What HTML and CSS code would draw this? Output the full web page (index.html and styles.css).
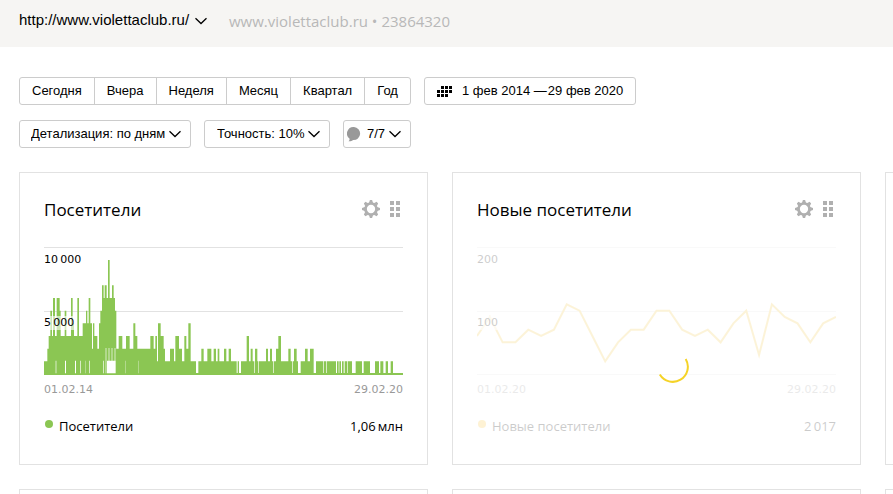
FILE: index.html
```html
<!DOCTYPE html>
<html lang="ru">
  <head>
    <meta charset="UTF-8" />
    <title>Сводка</title>
    <link rel="stylesheet" href="styles.css" />
  </head>
  <body>
    <svg class="sprite" width="0" height="0" aria-hidden="true">
      <symbol id="arrow" viewBox="0 0 12 8">
        <path d="M.5 1.2l5.500 5.300 5.500-5.300" fill="none" stroke="currentColor" stroke-width="1.300" />
      </symbol>
      <symbol id="gear" viewBox="0 0 18 18">
        <circle cx="9" cy="9" r="5.500" fill="none" stroke="currentColor" stroke-width="2.700" />
        <g fill="currentColor">
          <path id="teeth" d="M6.800 3.500L7.900 0h2.200l1.100 3.500zM6.800 14.500L7.900 18h2.200l1.100-3.500zM3.500 6.800L0 7.900v2.200l3.500 1.100zM14.500 6.800L18 7.900v2.200l-3.500 1.100z" />
          <use href="#teeth" transform="rotate(45 9 9)" />
        </g>
      </symbol>
      <symbol id="drag" viewBox="0 0 10 16">
        <path d="M0 0h4v4H0zM6 0h4v4H6zM0 6h4v4H0zM6 6h4v4H6zM0 12h4v4H0zM6 12h4v4H6z" fill="currentColor" />
      </symbol>
    </svg>

    <header class="header">
      <div class="dropdown counter">
        <select aria-label="Счётчик">
          <option>http://www.violettaclub.ru/</option>
        </select>
        <svg class="arrow"><use href="#arrow" /></svg>
      </div>
      <span class="counter-info">www.violettaclub.ru • 23864320</span>
    </header>

    <main>
      <div class="toolbar">
        <div class="periods">
          <button>Сегодня</button>
          <button>Вчера</button>
          <button>Неделя</button>
          <button>Месяц</button>
          <button>Квартал</button>
          <button>Год</button>
        </div>
        <button class="calendar">
          <svg width="15" height="11" viewBox="0 0 15 11">
            <path d="M4 0h3v3H4zM8 0h3v3H8zM12 0h3v3h-3zM0 4h3v3H0zM4 4h3v3H4zM8 4h3v3H8zM12 4h3v3h-3zM0 8h3v3H0zM4 8h3v3H4zM8 8h3v3H8z" />
          </svg>
          <span>1 фев 2014 —&#8202;29 фев 2020</span>
        </button>
      </div>

      <div class="toolbar">
        <div class="dropdown">
          <select aria-label="Детализация">
            <option>Детализация: по дням</option>
          </select>
          <svg class="arrow"><use href="#arrow" /></svg>
        </div>
        <div class="dropdown accuracy">
          <select aria-label="Точность">
            <option>Точность: 10%</option>
          </select>
          <svg class="arrow"><use href="#arrow" /></svg>
        </div>
        <div class="dropdown notes">
          <svg class="bubble" width="14" height="16" viewBox="0 0 14 16">
            <path d="M7 1a6.500 6.500 0 1 1-.8 13C5 15 3.300 15.500 1.500 15.300c.8-.7 1.100-1.500 1.100-2.600A6.500 6.500 0 0 1 7 1z" />
          </svg>
          <select aria-label="Примечания">
            <option>7/7</option>
          </select>
          <svg class="arrow"><use href="#arrow" /></svg>
        </div>
      </div>

      <div class="widgets">
        <section class="widget">
          <div class="widget-head">
            <h2>Посетители</h2>
            <button aria-label="Настроить"><svg width="18" height="18"><use href="#gear" /></svg></button>
            <button aria-label="Переместить"><svg width="10" height="16"><use href="#drag" /></svg></button>
          </div>
          <div class="chart">
            <svg viewBox="0 0 1077 384" preserveAspectRatio="none">
              <path class="grid" d="M0 1.500H1077M0 193.500H1077M0 382.500H1077" />
              <path id="visitors" class="bars" />
              <path id="gaps" class="gaps" />
            </svg>
            <span class="tick">10&#8201;000</span>
            <span class="tick middle">5&#8201;000</span>
          </div>
          <div class="dates"><span>01.02.14</span><span>29.02.20</span></div>
          <div class="legend">
            <i class="dot"></i><span>Посетители</span><span class="total">1,06&#8201;млн</span>
          </div>
        </section>

        <section class="widget loading">
          <div class="widget-head">
            <h2>Новые посетители</h2>
            <button aria-label="Настроить"><svg width="18" height="18"><use href="#gear" /></svg></button>
            <button aria-label="Переместить"><svg width="10" height="16"><use href="#drag" /></svg></button>
          </div>
          <div class="chart">
            <svg viewBox="0 0 1077 384" preserveAspectRatio="none">
              <path class="grid" d="M0 1.500H1077M0 193.500H1077M0 382.500H1077" />
              <polyline id="newcomers" class="line" />
            </svg>
            <span class="tick">200</span>
            <span class="tick middle">100</span>
          </div>
          <div class="dates"><span>01.02.20</span><span>29.02.20</span></div>
          <div class="legend">
            <i class="dot"></i><span>Новые посетители</span><span class="total">2&#8201;017</span>
          </div>
          <svg class="spinner" width="32" height="32" viewBox="0 0 32 32">
            <path d="M28.700 8A15 15 0 0 1 2.800 23.500" />
          </svg>
        </section>

        <section class="widget"></section>
        <section class="widget"></section>
        <section class="widget"></section>
        <section class="widget"></section>
      </div>
    </main>

    <script src="charts.js"></script>
  </body>
</html>
```

FILE: styles.css
```css
body {
  margin: 0;
  overflow: hidden;
  background: #fff;
  color: #000;
  font-family: "Liberation Sans", Arial, sans-serif;
  font-size: 13px;
}

button,
select {
  margin: 0;
  padding: 0;
  border: 0;
  background: transparent;
  color: inherit;
  font: inherit;
  cursor: pointer;
}

select {
  appearance: none;
}

.sprite {
  position: absolute;
}

.header {
  display: flex;
  align-items: center;
  height: 47px;
  padding: 0 19px 6px;
  box-sizing: border-box;
  background: #f6f5f3;
}

.counter-info {
  margin-left: 22px;
  color: #b8b8b8;
  font-family: "Open Sans", "Noto Sans", sans-serif;
  font-size: 15px;
  line-height: 20px;
}

main {
  padding: 30px 0 0 19px;
}

.toolbar {
  display: flex;
  gap: 13px;
  margin-bottom: 15px;
}

.periods,
.calendar,
.dropdown {
  display: flex;
  align-items: center;
  height: 28px;
  box-sizing: border-box;
  border: 1px solid #ccc;
  border-radius: 3px;
}

.periods button {
  height: 26px;
  padding: 0 12px 2px;
}

.periods button + button {
  border-left: 1px solid #ccc;
}

.calendar {
  gap: 10px;
  padding: 0 12px;
}

.calendar span {
  padding-bottom: 2px;
}

.dropdown {
  padding: 0 9px 0 11px;
  gap: 3px;
}

.dropdown select {
  padding-bottom: 2px;
}

.dropdown.accuracy {
  padding-left: 12px;
}

.dropdown.counter {
  padding: 0;
  border: 0;
  gap: 5px;
  font-size: 15px;
}

.dropdown.notes {
  padding: 0 9px 0 3px;
}

.bubble {
  margin-right: 3px;
  fill: #999;
}

.arrow {
  width: 12px;
  height: 8px;
  pointer-events: none;
}

.widgets {
  display: grid;
  grid-template-columns: repeat(3, minmax(409px, 1fr));
  gap: 24px;
  margin-top: 24px;
}

.widget {
  position: relative;
  box-sizing: border-box;
  min-height: 293px;
  padding: 24px;
  border: 1px solid #e2e2e2;
}

.widget-head {
  display: flex;
  align-items: center;
  height: 24px;
  margin-bottom: 26px;
  padding-right: 3px;
  gap: 10px;
  color: #b0b0b0;
}

.widget-head h2 {
  flex: 1;
  margin: 0;
  color: #000;
  font-family: "Open Sans", "Noto Sans", sans-serif;
  font-size: 17px;
  font-weight: 400;
}

.widget-head button {
  display: flex;
}

.chart {
  position: relative;
  height: 128px;
}

.chart svg {
  display: block;
  width: 100%;
  height: 100%;
}

.grid {
  stroke: #e2e2e2;
  stroke-width: 3;
}

.bars {
  fill: #8bc653;
}

.gaps {
  fill: #fff;
}

.line {
  fill: none;
  stroke: #f5c842;
  stroke-width: 2;
  vector-effect: non-scaling-stroke;
}

.tick {
  position: absolute;
  top: 6px;
  left: 0;
  background: rgba(255, 255, 255, 0.6);
  font-family: "DejaVu Sans", Verdana, sans-serif;
  font-size: 11px;
  line-height: 14px;
}

.tick.middle {
  top: 69px;
}

.dates {
  display: flex;
  justify-content: space-between;
  margin-top: 8px;
  color: #999;
  font-family: "DejaVu Sans", Verdana, sans-serif;
  font-size: 11px;
  line-height: 14px;
}

.legend {
  display: flex;
  align-items: center;
  margin-top: 19px;
  font-family: "Open Sans", "Noto Sans", sans-serif;
  font-size: 13px;
  line-height: 20px;
}

.dot {
  width: 8px;
  height: 8px;
  margin: 0 6px 4px 1px;
  border-radius: 50%;
  background: #8bc653;
}

.total {
  margin-left: auto;
}

.loading .chart,
.loading .dates,
.loading .legend {
  opacity: 0.2;
}

.loading .dot {
  background: #fbc02d;
}

.spinner {
  position: absolute;
  top: 178px;
  left: 50%;
  fill: none;
  stroke: #f5d327;
  stroke-width: 2;
}
```

FILE: charts.js
```javascript
const BASE = 381;
const STEP = 38;

// [x, level]: the level holds until the next x
const visitors = [
  [0, 1], [10, 2], [14, 3], [19, 5], [24, 3], [27, 6], [33, 3], [38, 6], [47, 5],
  [50, 3], [62, 5], [67, 3], [81, 6], [86, 4], [90, 3], [100, 6], [105, 3],
  [116, 4], [126, 5], [130, 4], [134, 6], [139, 4], [144, 2], [147, 4], [151, 3],
  [155, 3], [160, 2], [165, 4], [169, 5], [174, 7], [179, 6], [182, 7], [188, 6],
  [192, 9], [197, 6], [204, 7], [209, 6], [213, 5], [217, 2], [224, 3], [235, 2],
  [246, 3], [257, 2], [268, 4], [274, 3], [280, 2], [319, 3], [329, 2], [334, 3],
  [339, 1], [342, 4], [350, 3], [359, 2], [363, 1], [378, 2], [390, 1], [394, 3],
  [405, 2], [414, 1], [421, 3], [427, 2], [433, 4], [440, 1], [456, 0], [463, 1],
  [472, 2], [479, 1], [490, 2], [502, 1], [509, 2], [516, 1], [521, 2], [526, 1],
  [540, 2], [547, 1], [554, 2], [561, 1], [578, 0], [581, 1], [585, 0], [591, 1],
  [608, 3], [615, 1], [620, 2], [626, 1], [631, 0], [633, 2], [640, 1], [643, 0],
  [645, 1], [666, 2], [672, 1], [678, 2], [684, 1], [688, 0], [690, 1], [696, 2],
  [703, 3], [711, 1], [733, 2], [740, 1], [744, 0], [746, 1], [750, 2], [758, 1],
  [762, 0], [770, 1], [783, 2], [791, 1], [798, 2], [809, 0], [816, 1], [838, 0],
  [840, 1], [846, 0], [848, 1], [876, 0], [879, 1], [884, 0], [886, 1], [891, 0],
  [894, 1], [899, 0], [902, 1], [909, 0], [911, 1], [924, 0], [935, 1], [954, 0],
  [959, 1], [978, 0], [993, 1], [1005, 0], [1009, 1], [1018, 0], [1025, 1],
  [1032, 0], [1040, 1], [1047, 0],
];

let d = `M0 ${BASE}`;
for (const [x, level] of visitors) {
  d += `H${x}V${level ? BASE - level * STEP : BASE - 3}`;
}
d += "H1077V384H0z";
document.getElementById("visitors").setAttribute("d", d);

// holes under the bars: [x, width, levels]
const gaps = [
  [35, 2, 1], [63, 3, 1], [93, 3, 1], [109, 2, 1], [124, 1, 1], [136, 2, 1],
  [177, 2, 1], [185, 2, 2], [189, 26, 1], [194, 2, 2], [203, 2, 2], [212, 2, 2],
  [245, 1, 1], [283, 1, 1],
];
document.getElementById("gaps").setAttribute(
  "d",
  gaps
    .map(([x, w, levels]) => `M${x} ${BASE - 2}v${-levels * STEP}h${w}v${levels * STEP}z`)
    .join("")
);

const newcomers = [
  60, 90, 50, 50, 70, 60, 70, 110, 100, 60, 20, 50, 70, 70, 100, 100, 70, 60, 70,
  50, 80, 100, 30, 110, 90, 80, 50, 80, 90,
];
document.getElementById("newcomers").setAttribute(
  "points",
  newcomers.map((v, i) => `${(i * 1077) / 28},${BASE - v * 1.9}`).join(" ")
);
```
